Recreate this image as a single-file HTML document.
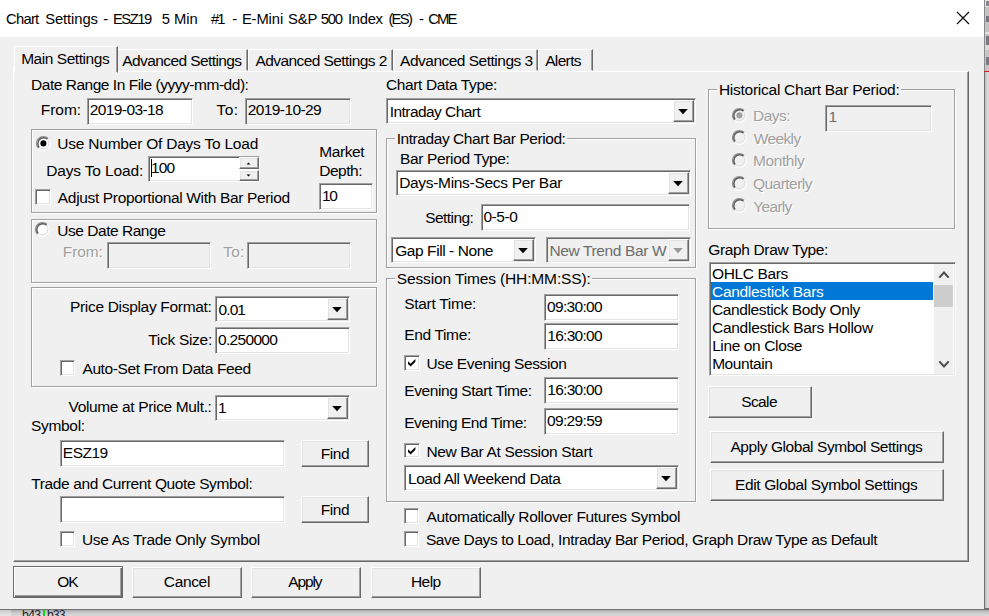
<!DOCTYPE html>
<html><head><meta charset="utf-8"><title>Chart Settings</title>
<style>
html,body{margin:0;padding:0;background:#c9c9c9;}
#root{position:relative;width:989px;height:616px;overflow:hidden;background:#c9c9c9;font-family:"Liberation Sans",sans-serif;font-size:15.5px;line-height:17px;color:#000;}
#root div, #root svg{position:absolute;box-sizing:border-box;}
.t{white-space:pre;}
.gray{color:#6d6d6d;}
.dgray{color:#6d6d6d;}
.emb{color:#a0a0a0;text-shadow:1px 1px 0 #fff;}
.edit{background:#fff;border:1px solid;border-color:#a0a0a0 #fff #fff #a0a0a0;box-shadow:inset 1px 1px 0 #696969, inset -1px -1px 0 #e3e3e3;}
.edit.dis{background:#f0f0f0;}
.btn{background:#f0f0f0;border:1px solid;border-color:#fff #696969 #696969 #fff;box-shadow:inset -1px -1px 0 #a0a0a0, inset 1px 1px 0 #e3e3e3;}
.btn.def{border-color:#696969;box-shadow:inset 1px 1px 0 #fff, inset -1px -1px 0 #696969, inset -2px -2px 0 #a0a0a0;}
.grp{border:1px solid #a0a0a0;box-shadow:1px 1px 0 #fff;}
.grp i{position:absolute;left:0;top:0;right:0;bottom:0;border:1px solid;border-color:#fff transparent transparent #fff;}
.chk{background:#fff;border:1px solid;border-color:#a0a0a0 #fff #fff #a0a0a0;box-shadow:inset 1px 1px 0 #696969, inset -1px -1px 0 #e3e3e3;}

</style></head>
<body>
<div id="root">
<div style="left:983px;top:0;width:6px;height:616px;background:linear-gradient(90deg,#707070 0,#707070 1.6px,#b4b4b4 1.7px,#cfcfcf 3.5px,#dedede 6px)"></div>
<div style="left:983px;top:0;width:6px;height:71px;background:linear-gradient(90deg,#8a8a8a 0,#8a8a8a 1.6px,rgba(0,0,0,0) 1.7px),linear-gradient(180deg,#e4e4e4 0,#e4e4e4 7px,#c4c4c4 7px,#c4c4c4 32.5px,#e2e2e2 32.5px,#e2e2e2 34.5px,#c6c6c6 34.5px,#c6c6c6 45px,#dadada 45px,#dadada 50px,#c6c6c6 50px,#c6c6c6 71px)"></div>
<div style="left:0;top:608px;width:989px;height:8px;background:linear-gradient(180deg,#707070 0,#707070 1.7px,#a8a8a8 1.8px,#c8c8c8 4.5px,#dadada 8px)"></div>
<div style="left:0;top:609.6px;width:11px;height:7px;background:linear-gradient(180deg,#c8c8c8,#e4e4e4 70%)"></div>
<div style="left:0;top:0;width:984.2px;height:609.2px;background:#f0f0f0"></div>
<div style="left:0;top:0;width:984px;height:37px;background:#fff"></div>
<div class="t " style="left:6.05px;top:11px;font-size:14.8px;line-height:16px;letter-spacing:-0.758px;">Chart</div>
<div class="t " style="left:45.23px;top:11px;font-size:14.8px;line-height:16px;letter-spacing:-0.11px;">Settings</div>
<div class="t " style="left:103.24px;top:11px;font-size:14.8px;line-height:16px;letter-spacing:0.087px;">-</div>
<div class="t " style="left:112.99px;top:11px;font-size:14.8px;line-height:16px;letter-spacing:-1.483px;">ESZ19</div>
<div class="t " style="left:161.81px;top:11px;font-size:14.8px;line-height:16px;letter-spacing:-0.517px;">5</div>
<div class="t " style="left:173.99px;top:11px;font-size:14.8px;line-height:16px;letter-spacing:-0.086px;">Min</div>
<div class="t " style="left:210.93px;top:11px;font-size:14.8px;line-height:16px;letter-spacing:-1.975px;">#1</div>
<div class="t " style="left:232.14px;top:11px;font-size:14.8px;line-height:16px;letter-spacing:-0.313px;">-</div>
<div class="t " style="left:241.89px;top:11px;font-size:14.8px;line-height:16px;letter-spacing:-0.125px;">E-Mini</div>
<div class="t " style="left:287.93px;top:11px;font-size:14.8px;line-height:16px;letter-spacing:-0.131px;">S&amp;P</div>
<div class="t " style="left:320.71px;top:11px;font-size:14.8px;line-height:16px;letter-spacing:-1.211px;">500</div>
<div class="t " style="left:348.03px;top:11px;font-size:14.8px;line-height:16px;letter-spacing:-0.32px;">Index</div>
<div class="t " style="left:388.38px;top:11px;font-size:14.8px;line-height:16px;letter-spacing:-1.688px;">(ES)</div>
<div class="t " style="left:419.04px;top:11px;font-size:14.8px;line-height:16px;letter-spacing:-0.013px;">-</div>
<div class="t " style="left:428.15px;top:11px;font-size:14.8px;line-height:16px;letter-spacing:-1.8px;">CME</div>
<svg width="14" height="14" viewBox="0 0 14 14" style="left:955.9px;top:11px"><path d="M1 1L13 13M13 1L1 13" stroke="#000" stroke-width="1.1" fill="none"/></svg>
<div style="left:13.4px;top:71px;width:955.6px;height:491px;border:1px solid;border-color:#fff #696969 #696969 #fff;box-shadow:inset -1px -1px 0 #a0a0a0"></div>
<div style="left:117px;top:49px;width:131px;height:22px;border:1px solid;border-color:#fff #696969 transparent #fff;box-shadow:inset -1px 0 0 #a0a0a0"></div>
<div class="t " style="left:122.27px;top:52px;letter-spacing:-0.591px;">Advanced Settings</div>
<div style="left:248px;top:49px;width:145px;height:22px;border:1px solid;border-color:#fff #696969 transparent #fff;box-shadow:inset -1px 0 0 #a0a0a0"></div>
<div class="t " style="left:255.57px;top:52px;letter-spacing:-0.582px;">Advanced Settings 2</div>
<div style="left:393px;top:49px;width:145px;height:22px;border:1px solid;border-color:#fff #696969 transparent #fff;box-shadow:inset -1px 0 0 #a0a0a0"></div>
<div class="t " style="left:400.07px;top:52px;letter-spacing:-0.504px;">Advanced Settings 3</div>
<div style="left:538px;top:49px;width:55px;height:22px;border:1px solid;border-color:#fff #696969 transparent #fff;box-shadow:inset -1px 0 0 #a0a0a0"></div>
<div class="t " style="left:545.17px;top:52px;letter-spacing:-0.646px;">Alerts</div>
<div style="left:14px;top:46px;width:104px;height:27px;background:#f0f0f0;border:1px solid;border-color:#fff #696969 transparent #fff;box-shadow:inset -1px 0 0 #a0a0a0"></div>
<div style="left:13px;top:66px;width:1px;height:6px;background:#fff"></div>
<div class="t " style="left:21.13px;top:50px;letter-spacing:-0.448px;">Main Settings</div>
<div class="t " style="left:31.03px;top:76px;letter-spacing:-0.473px;">Date Range In File (yyyy-mm-dd):</div>
<div class="t " style="left:40.83px;top:101px;letter-spacing:-0.045px;">From:</div>
<div class="edit" style="left:87.00px;top:98.00px;width:106.00px;height:27.00px;"></div>
<div class="t " style="left:89.72px;top:101px;letter-spacing:-0.593px;">2019-03-18</div>
<div class="t " style="left:216.55px;top:101px;letter-spacing:0.443px;">To:</div>
<div class="edit dis" style="left:245.00px;top:98.00px;width:106.00px;height:27.00px;"></div>
<div class="t " style="left:247.72px;top:101px;letter-spacing:-0.586px;">2019-10-29</div>
<div class="grp" style="left:31.00px;top:129.00px;width:346.00px;height:84.00px;"><i></i></div>
<svg width="16.8" height="16.8" viewBox="0 0 16 16" style="position:absolute;left:34.60px;top:134.60px"><circle cx="8" cy="8" r="6.2" fill="#fff"/><path d="M3.4 12.6A6.5 6.5 0 0 1 12.6 3.4" fill="none" stroke="#909090" stroke-width="1.3"/><path d="M4.05 11.95A5.6 5.6 0 0 1 11.95 4.05" fill="none" stroke="#5c5c5c" stroke-width="1.4"/><path d="M12.6 3.4A6.5 6.5 0 0 1 3.4 12.6" fill="none" stroke="#fff" stroke-width="1.1"/><path d="M11.95 4.05A5.6 5.6 0 0 1 4.05 11.95" fill="none" stroke="#e3e3e3" stroke-width="1.2"/><circle cx="8" cy="8" r="2.9" fill="#000"/></svg>
<div class="t " style="left:57.30px;top:135px;letter-spacing:-0.219px;">Use Number Of Days To Load</div>
<div class="t " style="left:46.13px;top:162px;letter-spacing:-0.143px;">Days To Load:</div>
<div class="edit" style="left:148.00px;top:156.00px;width:112.00px;height:26.40px;"></div>
<div class="t " style="left:151.12px;top:159px;letter-spacing:-0.938px;">100</div>
<div style="left:151px;top:158.6px;width:1px;height:18.4px;background:#000"></div>
<div class="btn" style="left:239.00px;top:157.20px;width:20.00px;height:11.40px;"><svg width="5" height="3" viewBox="0 0 5 3" style="left:50%;top:50%;margin-left:-2.6px;margin-top:-1.2px"><path d="M0.5 2.6H4.5L2.5 0.5Z" fill="#000"/></svg></div>
<div class="btn" style="left:239.00px;top:169.60px;width:20.00px;height:11.40px;"><svg width="5" height="3" viewBox="0 0 5 3" style="left:50%;top:50%;margin-left:-2.6px;margin-top:-1.2px"><path d="M0.5 0.4H4.5L2.5 2.5Z" fill="#000"/></svg></div>
<div class="chk" style="left:34.80px;top:188.80px;width:15.90px;height:15.90px;"></div>
<div class="t " style="left:57.87px;top:189px;letter-spacing:-0.341px;">Adjust Proportional With Bar Period</div>
<div class="t " style="left:319.13px;top:143px;letter-spacing:-0.377px;">Market</div>
<div class="t " style="left:319.13px;top:162px;letter-spacing:-0.436px;">Depth:</div>
<div class="edit" style="left:319.00px;top:183.00px;width:54.00px;height:26.50px;"></div>
<div class="t " style="left:321.92px;top:187px;letter-spacing:-1.255px;">10</div>
<div class="grp" style="left:31.00px;top:219.00px;width:346.00px;height:64.20px;"><i></i></div>
<svg width="16.8" height="16.8" viewBox="0 0 16 16" style="position:absolute;left:34.10px;top:221.40px"><circle cx="8" cy="8" r="6.2" fill="#fff"/><path d="M3.4 12.6A6.5 6.5 0 0 1 12.6 3.4" fill="none" stroke="#909090" stroke-width="1.3"/><path d="M4.05 11.95A5.6 5.6 0 0 1 11.95 4.05" fill="none" stroke="#5c5c5c" stroke-width="1.4"/><path d="M12.6 3.4A6.5 6.5 0 0 1 3.4 12.6" fill="none" stroke="#fff" stroke-width="1.1"/><path d="M11.95 4.05A5.6 5.6 0 0 1 4.05 11.95" fill="none" stroke="#e3e3e3" stroke-width="1.2"/></svg>
<div class="t " style="left:57.30px;top:222px;letter-spacing:-0.47px;">Use Date Range</div>
<div class="t emb" style="left:62.83px;top:243px;letter-spacing:-0.12px;">From:</div>
<div class="edit dis" style="left:107.30px;top:242.20px;width:103.70px;height:26.60px;"></div>
<div class="t emb" style="left:223.15px;top:243px;letter-spacing:0.243px;">To:</div>
<div class="edit dis" style="left:247.30px;top:242.20px;width:103.70px;height:26.60px;"></div>
<div class="grp" style="left:31.00px;top:287.00px;width:346.00px;height:99.60px;"><i></i></div>
<div class="t " style="left:69.93px;top:298px;letter-spacing:-0.308px;">Price Display Format:</div>
<div class="edit" style="left:215.00px;top:296.20px;width:134.70px;height:25.50px;"></div>
<div class="btn" style="left:326.90px;top:298.20px;width:20.80px;height:21.50px;"><svg width="10" height="6" viewBox="0 0 10 6" style="position:absolute;left:50%;top:50%;margin-left:-5.4px;margin-top:-2.2px"><path d="M0.2 0H9.8L5 5.3Z" fill="#000"/></svg></div>
<div class="t " style="left:218.59px;top:301px;letter-spacing:-0.935px;">0.01</div>
<div class="t " style="left:148.25px;top:331px;letter-spacing:-0.293px;">Tick Size:</div>
<div class="edit" style="left:215.00px;top:327.30px;width:134.50px;height:26.90px;"></div>
<div class="t " style="left:218.09px;top:331px;letter-spacing:-0.691px;">0.250000</div>
<div class="chk" style="left:59.50px;top:359.70px;width:15.90px;height:15.90px;"></div>
<div class="t " style="left:82.47px;top:360px;letter-spacing:-0.406px;">Auto-Set From Data Feed</div>
<div class="t " style="left:68.53px;top:398px;letter-spacing:-0.351px;">Volume at Price Mult.:</div>
<div class="edit" style="left:215.00px;top:395.20px;width:134.70px;height:25.70px;"></div>
<div class="btn" style="left:326.90px;top:397.20px;width:20.80px;height:21.70px;"><svg width="10" height="6" viewBox="0 0 10 6" style="position:absolute;left:50%;top:50%;margin-left:-5.4px;margin-top:-2.2px"><path d="M0.2 0H9.8L5 5.3Z" fill="#000"/></svg></div>
<div class="t " style="left:218.00px;top:399px;">1</div>
<div class="t " style="left:30.90px;top:417px;letter-spacing:-0.295px;">Symbol:</div>
<div class="edit" style="left:60.20px;top:440.00px;width:224.80px;height:26.60px;"></div>
<div class="t " style="left:62.83px;top:444px;letter-spacing:-0.495px;">ESZ19</div>
<div class="btn" style="left:301.00px;top:440.30px;width:68.00px;height:27.00px;"></div>
<div class="t " style="left:320.83px;top:445px;letter-spacing:-0.494px;">Find</div>
<div class="t " style="left:31.25px;top:475px;letter-spacing:-0.375px;">Trade and Current Quote Symbol:</div>
<div class="edit" style="left:60.20px;top:496.00px;width:224.80px;height:26.60px;"></div>
<div class="btn" style="left:301.00px;top:495.80px;width:68.00px;height:27.00px;"></div>
<div class="t " style="left:320.83px;top:501px;letter-spacing:-0.494px;">Find</div>
<div class="chk" style="left:59.50px;top:530.70px;width:15.90px;height:15.90px;"></div>
<div class="t " style="left:81.90px;top:531px;letter-spacing:-0.299px;">Use As Trade Only Symbol</div>
<div class="t " style="left:385.91px;top:76px;letter-spacing:-0.372px;">Chart Data Type:</div>
<div class="edit" style="left:386.40px;top:98.00px;width:309.40px;height:25.90px;"></div>
<div class="btn" style="left:673.00px;top:100.00px;width:20.80px;height:21.90px;"><svg width="10" height="6" viewBox="0 0 10 6" style="position:absolute;left:50%;top:50%;margin-left:-5.4px;margin-top:-2.2px"><path d="M0.2 0H9.8L5 5.3Z" fill="#000"/></svg></div>
<div class="t " style="left:389.67px;top:103px;letter-spacing:-0.544px;">Intraday Chart</div>
<div class="grp" style="left:386.30px;top:138.00px;width:309.70px;height:130.20px;"><i></i></div>
<div style="position:absolute;left:395.20px;top:136.00px;width:172.30px;height:5px;background:#f0f0f0"></div>
<div class="t " style="left:396.67px;top:130px;letter-spacing:-0.433px;">Intraday Chart Bar Period:</div>
<div class="t " style="left:399.93px;top:150px;letter-spacing:-0.345px;">Bar Period Type:</div>
<div class="edit" style="left:395.60px;top:170.00px;width:295.20px;height:25.70px;"></div>
<div class="btn" style="left:668.00px;top:172.00px;width:20.80px;height:21.70px;"><svg width="10" height="6" viewBox="0 0 10 6" style="position:absolute;left:50%;top:50%;margin-left:-5.4px;margin-top:-2.2px"><path d="M0.2 0H9.8L5 5.3Z" fill="#000"/></svg></div>
<div class="t " style="left:399.13px;top:174px;letter-spacing:-0.307px;">Days-Mins-Secs Per Bar</div>
<div class="t " style="left:425.20px;top:209px;letter-spacing:-0.549px;">Setting:</div>
<div class="edit" style="left:481.20px;top:204.40px;width:208.80px;height:26.40px;"></div>
<div class="t " style="left:483.39px;top:208px;letter-spacing:-0.418px;">0-5-0</div>
<div class="edit" style="left:391.40px;top:236.80px;width:144.80px;height:26.30px;"></div>
<div class="btn" style="left:513.40px;top:238.80px;width:20.80px;height:22.30px;"><svg width="10" height="6" viewBox="0 0 10 6" style="position:absolute;left:50%;top:50%;margin-left:-5.4px;margin-top:-2.2px"><path d="M0.2 0H9.8L5 5.3Z" fill="#000"/></svg></div>
<div class="t " style="left:395.22px;top:242px;letter-spacing:-0.426px;">Gap Fill - None</div>
<div class="edit dis" style="left:546.40px;top:236.80px;width:144.80px;height:26.30px;"></div>
<div class="btn" style="left:668.40px;top:238.80px;width:20.80px;height:22.30px;"><svg width="10" height="6" viewBox="0 0 10 6" style="position:absolute;left:50%;top:50%;margin-left:-5.4px;margin-top:-2.2px"><path d="M0.2 0H9.8L5 5.3Z" fill="#9a9a9a"/></svg></div>
<div style="position:absolute;left:548.40px;top:238.80px;width:120.00px;height:22.30px;overflow:hidden"><div class="t dgray" style="left:1.03px;top:3.20px;letter-spacing:-0.371px">New Trend Bar W</div></div>
<div class="grp" style="left:386.30px;top:278.00px;width:309.70px;height:223.60px;"><i></i></div>
<div style="position:absolute;left:395.20px;top:276.00px;width:197.20px;height:5px;background:#f0f0f0"></div>
<div class="t " style="left:396.80px;top:270px;letter-spacing:-0.134px;">Session Times (HH:MM:SS):</div>
<div class="t " style="left:404.20px;top:295px;letter-spacing:-0.282px;">Start Time:</div>
<div class="edit" style="left:544.40px;top:294.40px;width:134.60px;height:26.40px;"></div>
<div class="t " style="left:547.09px;top:298px;letter-spacing:-0.689px;">09:30:00</div>
<div class="t " style="left:404.23px;top:326px;letter-spacing:-0.349px;">End Time:</div>
<div class="edit" style="left:544.40px;top:323.00px;width:134.60px;height:27.40px;"></div>
<div class="t " style="left:547.32px;top:327px;letter-spacing:-0.721px;">16:30:00</div>
<div class="chk" style="left:403.80px;top:355.10px;width:15.90px;height:15.90px;"><svg width="16" height="16" viewBox="0 0 16 16" style="position:absolute;left:-1px;top:-1px"><path d="M4 6.2L6.6 8.8L11.4 4V6.8L6.6 11.6L4 9Z" fill="#000"/></svg></div>
<div class="t " style="left:426.50px;top:355px;letter-spacing:-0.385px;">Use Evening Session</div>
<div class="t " style="left:404.23px;top:382px;letter-spacing:-0.409px;">Evening Start Time:</div>
<div class="edit" style="left:544.40px;top:377.40px;width:134.60px;height:26.40px;"></div>
<div class="t " style="left:547.32px;top:381px;letter-spacing:-0.721px;">16:30:00</div>
<div class="t " style="left:404.23px;top:414px;letter-spacing:-0.451px;">Evening End Time:</div>
<div class="edit" style="left:544.40px;top:408.20px;width:134.60px;height:26.40px;"></div>
<div class="t " style="left:547.09px;top:412px;letter-spacing:-0.671px;">09:29:59</div>
<div class="chk" style="left:403.80px;top:442.50px;width:15.90px;height:15.90px;"><svg width="16" height="16" viewBox="0 0 16 16" style="position:absolute;left:-1px;top:-1px"><path d="M4 6.2L6.6 8.8L11.4 4V6.8L6.6 11.6L4 9Z" fill="#000"/></svg></div>
<div class="t " style="left:426.43px;top:443px;letter-spacing:-0.345px;">New Bar At Session Start</div>
<div class="edit" style="left:404.10px;top:465.20px;width:274.50px;height:25.50px;"></div>
<div class="btn" style="left:655.80px;top:467.20px;width:20.80px;height:21.50px;"><svg width="10" height="6" viewBox="0 0 10 6" style="position:absolute;left:50%;top:50%;margin-left:-5.4px;margin-top:-2.2px"><path d="M0.2 0H9.8L5 5.3Z" fill="#000"/></svg></div>
<div class="t " style="left:408.03px;top:470px;letter-spacing:-0.447px;">Load All Weekend Data</div>
<div class="chk" style="left:403.60px;top:507.70px;width:15.90px;height:15.90px;"></div>
<div class="t " style="left:426.57px;top:508px;letter-spacing:-0.339px;">Automatically Rollover Futures Symbol</div>
<div class="chk" style="left:403.60px;top:531.10px;width:15.90px;height:15.90px;"></div>
<div class="t " style="left:425.90px;top:531px;letter-spacing:-0.389px;">Save Days to Load, Intraday Bar Period, Graph Draw Type as Default</div>
<div class="grp" style="left:708.30px;top:89.00px;width:246.70px;height:139.60px;"><i></i></div>
<div style="position:absolute;left:717.30px;top:87.00px;width:184.00px;height:5px;background:#f0f0f0"></div>
<div class="t " style="left:718.93px;top:81px;letter-spacing:-0.259px;">Historical Chart Bar Period:</div>
<svg width="16.8" height="16.8" viewBox="0 0 16 16" style="position:absolute;left:731.00px;top:106.60px"><circle cx="8" cy="8" r="6.2" fill="#f0f0f0"/><path d="M3.4 12.6A6.5 6.5 0 0 1 12.6 3.4" fill="none" stroke="#909090" stroke-width="1.3"/><path d="M4.05 11.95A5.6 5.6 0 0 1 11.95 4.05" fill="none" stroke="#5c5c5c" stroke-width="1.4"/><path d="M12.6 3.4A6.5 6.5 0 0 1 3.4 12.6" fill="none" stroke="#fff" stroke-width="1.1"/><path d="M11.95 4.05A5.6 5.6 0 0 1 4.05 11.95" fill="none" stroke="#e3e3e3" stroke-width="1.2"/><circle cx="8" cy="8" r="2.9" fill="#a0a0a0"/></svg>
<div class="t emb" style="left:753.03px;top:107px;letter-spacing:-0.533px;">Days:</div>
<svg width="16.8" height="16.8" viewBox="0 0 16 16" style="position:absolute;left:731.00px;top:129.30px"><circle cx="8" cy="8" r="6.2" fill="#f0f0f0"/><path d="M3.4 12.6A6.5 6.5 0 0 1 12.6 3.4" fill="none" stroke="#909090" stroke-width="1.3"/><path d="M4.05 11.95A5.6 5.6 0 0 1 11.95 4.05" fill="none" stroke="#5c5c5c" stroke-width="1.4"/><path d="M12.6 3.4A6.5 6.5 0 0 1 3.4 12.6" fill="none" stroke="#fff" stroke-width="1.1"/><path d="M11.95 4.05A5.6 5.6 0 0 1 4.05 11.95" fill="none" stroke="#e3e3e3" stroke-width="1.2"/></svg>
<div class="t emb" style="left:753.63px;top:130px;letter-spacing:-0.587px;">Weekly</div>
<svg width="16.8" height="16.8" viewBox="0 0 16 16" style="position:absolute;left:731.00px;top:151.80px"><circle cx="8" cy="8" r="6.2" fill="#f0f0f0"/><path d="M3.4 12.6A6.5 6.5 0 0 1 12.6 3.4" fill="none" stroke="#909090" stroke-width="1.3"/><path d="M4.05 11.95A5.6 5.6 0 0 1 11.95 4.05" fill="none" stroke="#5c5c5c" stroke-width="1.4"/><path d="M12.6 3.4A6.5 6.5 0 0 1 3.4 12.6" fill="none" stroke="#fff" stroke-width="1.1"/><path d="M11.95 4.05A5.6 5.6 0 0 1 4.05 11.95" fill="none" stroke="#e3e3e3" stroke-width="1.2"/></svg>
<div class="t emb" style="left:753.03px;top:152px;letter-spacing:-0.429px;">Monthly</div>
<svg width="16.8" height="16.8" viewBox="0 0 16 16" style="position:absolute;left:731.00px;top:174.60px"><circle cx="8" cy="8" r="6.2" fill="#f0f0f0"/><path d="M3.4 12.6A6.5 6.5 0 0 1 12.6 3.4" fill="none" stroke="#909090" stroke-width="1.3"/><path d="M4.05 11.95A5.6 5.6 0 0 1 11.95 4.05" fill="none" stroke="#5c5c5c" stroke-width="1.4"/><path d="M12.6 3.4A6.5 6.5 0 0 1 3.4 12.6" fill="none" stroke="#fff" stroke-width="1.1"/><path d="M11.95 4.05A5.6 5.6 0 0 1 4.05 11.95" fill="none" stroke="#e3e3e3" stroke-width="1.2"/></svg>
<div class="t emb" style="left:752.97px;top:175px;letter-spacing:-0.522px;">Quarterly</div>
<svg width="16.8" height="16.8" viewBox="0 0 16 16" style="position:absolute;left:731.00px;top:197.30px"><circle cx="8" cy="8" r="6.2" fill="#f0f0f0"/><path d="M3.4 12.6A6.5 6.5 0 0 1 12.6 3.4" fill="none" stroke="#909090" stroke-width="1.3"/><path d="M4.05 11.95A5.6 5.6 0 0 1 11.95 4.05" fill="none" stroke="#5c5c5c" stroke-width="1.4"/><path d="M12.6 3.4A6.5 6.5 0 0 1 3.4 12.6" fill="none" stroke="#fff" stroke-width="1.1"/><path d="M11.95 4.05A5.6 5.6 0 0 1 4.05 11.95" fill="none" stroke="#e3e3e3" stroke-width="1.2"/></svg>
<div class="t emb" style="left:753.36px;top:198px;letter-spacing:-0.708px;">Yearly</div>
<div class="edit dis" style="left:825.00px;top:105.40px;width:107.40px;height:26.80px;"></div>
<div class="t gray" style="left:828.40px;top:108px;">1</div>
<div class="t " style="left:708.22px;top:241px;letter-spacing:-0.353px;">Graph Draw Type:</div>
<div class="edit" style="left:708.60px;top:262.40px;width:247.00px;height:113.60px;"></div>
<div style="left:710.6px;top:282px;width:222.4px;height:18px;background:#0078d7"></div>
<div class="t " style="left:712.07px;top:265px;letter-spacing:-0.368px;">OHLC Bars</div>
<div class="t " style="left:712.01px;top:283px;letter-spacing:-0.303px;color:#fff;">Candlestick Bars</div>
<div class="t " style="left:712.01px;top:301px;letter-spacing:-0.381px;">Candlestick Body Only</div>
<div class="t " style="left:712.01px;top:319px;letter-spacing:-0.271px;">Candlestick Bars Hollow</div>
<div class="t " style="left:712.13px;top:337px;letter-spacing:-0.377px;">Line on Close</div>
<div class="t " style="left:712.13px;top:355px;letter-spacing:-0.427px;">Mountain</div>
<div style="left:934px;top:264.4px;width:19.4px;height:109.6px;background:#f0f0f0"></div>
<div style="left:934px;top:285px;width:19.4px;height:21.8px;background:#cdcdcd"></div>
<svg width="12" height="9" viewBox="0 0 12 9" style="left:937.5px;top:269.9px"><path d="M1.3 7.6L6 2.6L10.7 7.6" fill="none" stroke="#4d4d4d" stroke-width="2.1"/></svg>
<svg width="12" height="9" viewBox="0 0 12 9" style="left:937.5px;top:359.7px"><path d="M1.3 1.4L6 6.4L10.7 1.4" fill="none" stroke="#4d4d4d" stroke-width="2.1"/></svg>
<div class="btn" style="left:708.20px;top:386.00px;width:104.20px;height:32.00px;"></div>
<div class="t " style="left:741.20px;top:393px;letter-spacing:-0.595px;">Scale</div>
<div class="btn" style="left:710.20px;top:431.00px;width:233.80px;height:32.00px;"></div>
<div class="t " style="left:730.47px;top:438px;letter-spacing:-0.437px;">Apply Global Symbol Settings</div>
<div class="btn" style="left:710.20px;top:469.00px;width:233.80px;height:32.00px;"></div>
<div class="t " style="left:734.93px;top:476px;letter-spacing:-0.357px;">Edit Global Symbol Settings</div>
<div class="btn def" style="left:13.00px;top:565.80px;width:110.20px;height:31.80px;"></div>
<div class="t " style="left:57.17px;top:573px;letter-spacing:-0.987px;">OK</div>
<div class="btn" style="left:132.00px;top:566.60px;width:110.20px;height:31.00px;"></div>
<div class="t " style="left:163.81px;top:573px;letter-spacing:-0.345px;">Cancel</div>
<div class="btn" style="left:251.00px;top:566.60px;width:110.00px;height:31.00px;"></div>
<div class="t " style="left:288.27px;top:573px;letter-spacing:-1.153px;">Apply</div>
<div class="btn" style="left:371.00px;top:566.60px;width:110.00px;height:31.00px;"></div>
<div class="t " style="left:411.03px;top:573px;letter-spacing:-0.585px;">Help</div>
<div class="t " style="left:22.11px;top:608px;font-size:12.2px;line-height:14px;letter-spacing:-0.716px;color:#1a1a2a;">b43</div>
<div class="t " style="left:46.91px;top:608px;font-size:12.2px;line-height:14px;letter-spacing:-0.816px;color:#1a1a2a;">b33</div>
<div style="left:43.2px;top:609.6px;width:2.2px;height:7px;background:#19d219"></div>
<div style="left:984.4px;top:70.6px;width:5px;height:1.8px;background:#e01818"></div>
<div style="left:986px;top:1px;width:3px;height:5px;background:#2a2a40;opacity:.5"></div>
<div style="left:986px;top:15.5px;width:3px;height:6px;background:#2a2a40;opacity:.5"></div>
<div style="left:986px;top:36px;width:3px;height:9px;background:#2a2a40;opacity:.5"></div>
<div style="left:986px;top:57px;width:3px;height:8px;background:#2a2a40;opacity:.5"></div>
</div>
</body></html>
